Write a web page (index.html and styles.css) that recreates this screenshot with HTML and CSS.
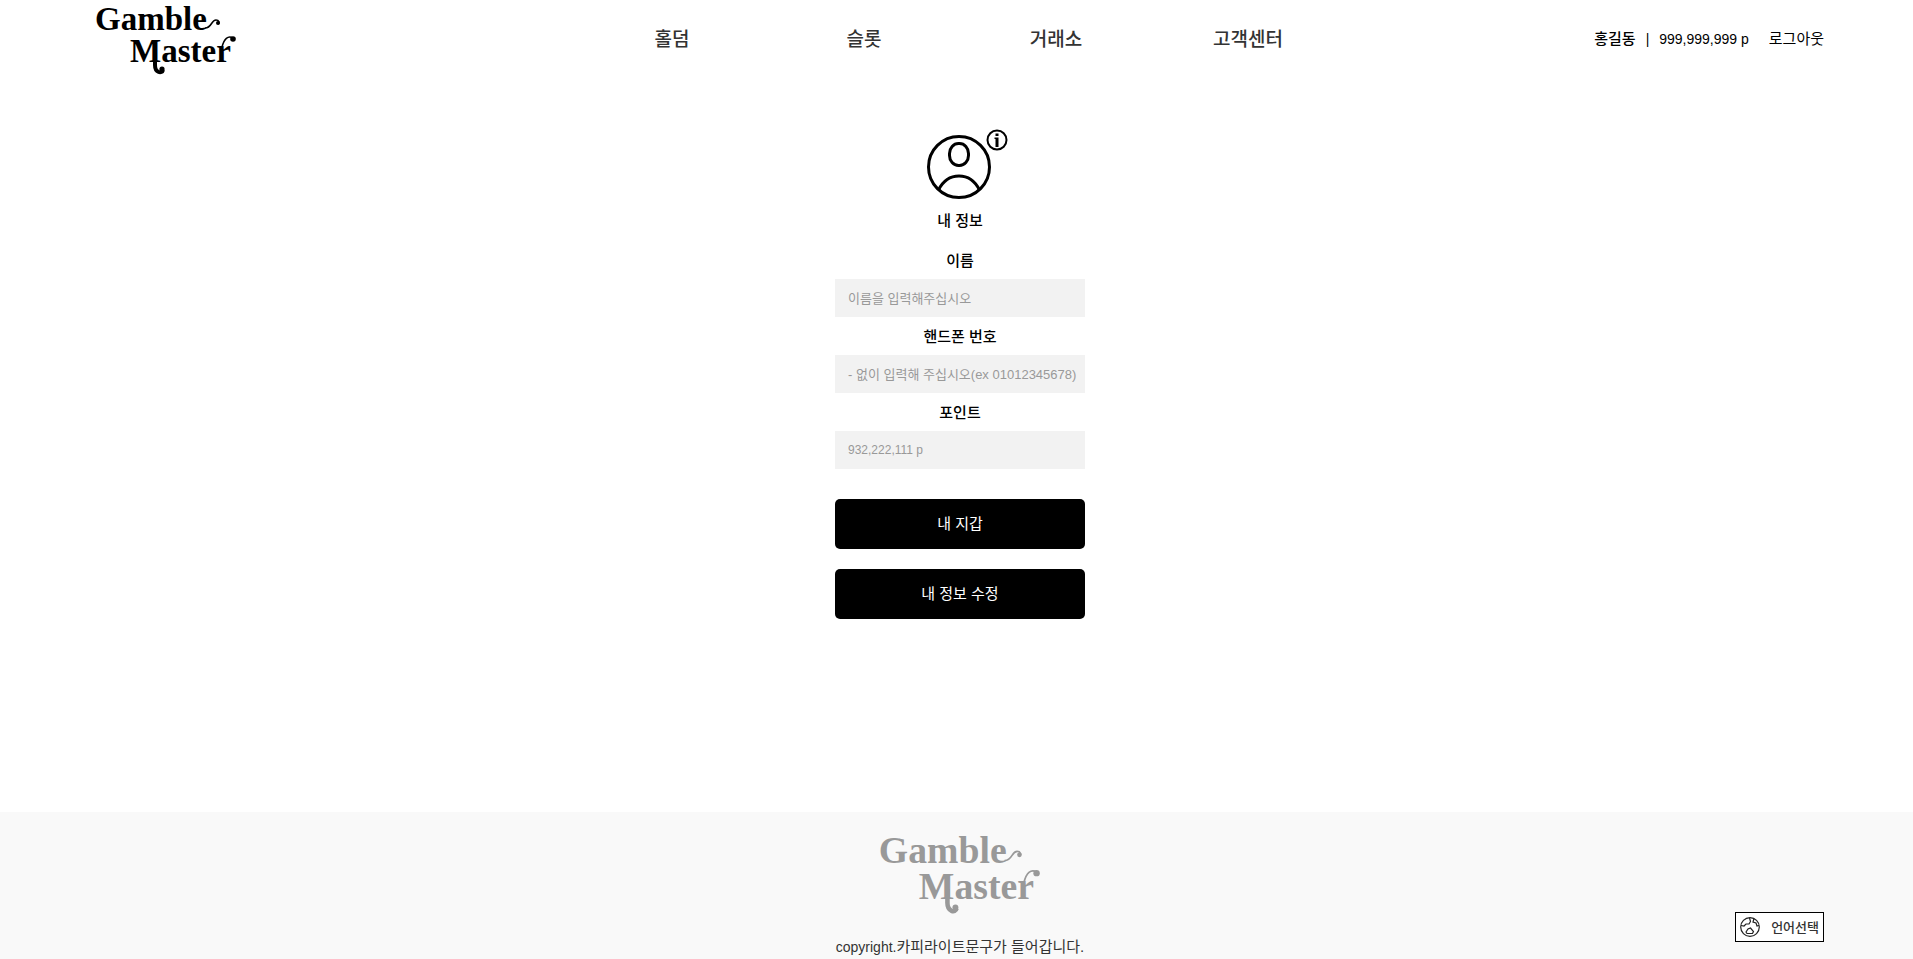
FILE: index.html
```html
<!DOCTYPE html>
<html lang="ko">
<head>
<meta charset="utf-8">
<meta name="viewport" content="width=device-width, initial-scale=1">
<title>Gamble Master</title>
<link rel="stylesheet" href="styles.css">
</head>
<body>
<header class="header">
  <a class="logo" href="#" aria-label="Gamble Master">
    <svg class="logo-art" viewBox="0 0 140 71">
      <text class="logo-word" x="-1" y="27">Gamble</text>
      <text class="logo-word" x="34" y="59">Master</text>
      <path class="logo-swash" d="M109 25C116 25 115 17 120 17C123 17 124 20 122 21"/>
      <circle cx="122" cy="20" r="2"/>
      <path class="logo-swash thick" d="M59 50V62C59 70 66 71 67 67"/>
      <circle cx="66" cy="66" r="2.6"/>
      <path class="logo-swash" d="M126 44C128 36 132 32 137 35"/>
      <circle cx="137" cy="36" r="2.8"/>
    </svg>
  </a>
  <nav class="nav">
    <a href="#">홀덤</a>
    <a href="#">슬롯</a>
    <a href="#">거래소</a>
    <a href="#">고객센터</a>
  </nav>
  <div class="account">
    <strong class="user">홍길동</strong>
    <span class="bar">|</span>
    <span class="points">999,999,999 p</span>
    <a class="logout" href="#">로그아웃</a>
  </div>
</header>

<main class="main">
  <form class="profile">
    <svg class="avatar" viewBox="0 0 106 72" aria-hidden="true">
      <g class="line">
        <circle cx="52" cy="39" r="30.500"/>
        <rect x="42.500" y="15.500" width="19" height="22" rx="9" ry="10"/>
        <path d="M31.500 62C36 53 43 48 52 48C61 48 68 53 72.500 62"/>
        <circle class="badge" cx="90" cy="12" r="9.500"/>
      </g>
      <rect x="88.500" y="5.500" width="3" height="2.500"/>
      <path d="M87.500 9.500H91.500V19H88.500V11H87.500Z"/>
    </svg>
    <h1 class="title">내 정보</h1>
    <label class="label" for="name">이름</label>
    <input class="field" id="name" type="text" placeholder="이름을 입력해주십시오">
    <label class="label" for="phone">핸드폰 번호</label>
    <input class="field" id="phone" type="tel" placeholder="- 없이 입력해 주십시오(ex 01012345678)">
    <label class="label" for="point">포인트</label>
    <input class="field number" id="point" type="text" placeholder="932,222,111 p">
    <div class="actions">
      <button class="action" type="button">내 지갑</button>
      <button class="action" type="button">내 정보 수정</button>
    </div>
  </form>
</main>

<footer class="footer">
  <svg class="logo-art" viewBox="0 0 140 71" role="img" aria-label="Gamble Master">
    <text class="logo-word" x="-1" y="27">Gamble</text>
    <text class="logo-word" x="34" y="59">Master</text>
    <path class="logo-swash" d="M109 25C116 25 115 17 120 17C123 17 124 20 122 21"/>
    <circle cx="122" cy="20" r="2"/>
    <path class="logo-swash thick" d="M59 50V62C59 70 66 71 67 67"/>
    <circle cx="66" cy="66" r="2.6"/>
    <path class="logo-swash" d="M126 44C128 36 132 32 137 35"/>
    <circle cx="137" cy="36" r="2.8"/>
  </svg>
  <p class="copyright">copyright.<span class="notice">카피라이트문구가 들어갑니다.</span></p>
</footer>

<button class="language" type="button">
  <svg class="globe" viewBox="0 0 20 20" aria-hidden="true">
    <circle cx="10" cy="10" r="9.300"/>
    <path d="M1 8.500L4 9L6 7L9 7L10.500 4.500L9.500 1M14 1.500L13 5L16 6L17 9L19 8.500"/>
    <path d="M6 15L8 12L10.500 11L13.500 14.500L12.500 16.500H7Z"/>
  </svg>
  언어선택
</button>
</body>
</html>
```
FILE: styles.css
```css
:root {
  --gutter-start: 96px;
  --gutter-end: 89px;
  --sans: "Liberation Sans", "Noto Sans CJK KR", sans-serif;
  --korean: "Noto Sans CJK KR", sans-serif;
}

* {
  box-sizing: border-box;
}

body {
  margin: 0;
  min-height: 100vh;
  display: flex;
  flex-direction: column;
  background: #fff;
  color: #000;
  font: 14px/20px var(--sans);
}

a {
  color: inherit;
  text-decoration: none;
}

.header {
  display: grid;
  grid-template-columns: 1fr minmax(0, 768px) 1fr;
  align-items: center;
  height: 76px;
  padding: 0 var(--gutter-end) 0 var(--gutter-start);
}

.logo {
  justify-self: start;
}

.logo-art {
  display: block;
  width: 140px;
  fill: currentColor;
  overflow: visible;
}

.logo-word {
  font: bold 33px "Liberation Serif", serif;
}

.logo-swash {
  fill: none;
  stroke: currentColor;
  stroke-width: 1.5;
}

.logo-swash.thick {
  stroke-width: 4;
}

.nav {
  display: grid;
  grid-template-columns: repeat(4, 1fr);
  text-align: center;
  font: 500 19px/28px var(--korean);
  color: #333;
}

.account {
  display: flex;
  justify-content: flex-end;
  align-items: center;
  padding-top: 2px;
}

.user,
.logout {
  font-size: 15px;
}

.user {
  font-weight: 500;
}

.bar {
  margin: 0 10px;
}

.logout {
  margin-left: 20px;
}

.main {
  flex: 1;
  padding: 52px var(--gutter-end) 40px var(--gutter-start);
}

.profile {
  display: flex;
  flex-direction: column;
  width: 250px;
  margin: 0 auto;
}

.avatar {
  width: 106px;
  align-self: center;
}

.line {
  fill: none;
  stroke: #000;
  stroke-width: 3;
}

.badge {
  stroke-width: 2;
}

.title,
.label {
  margin: 0;
  padding-top: 2px;
  text-align: center;
  font-size: 15px;
  line-height: 36px;
  font-weight: 500;
}

.title {
  padding: 3px 0 2px;
}

.field {
  width: 100%;
  height: 38px;
  padding: 0 8px 0 13px;
  border: 0;
  background: #f2f2f2;
  font: 13px/20px var(--sans);
}

.field::placeholder {
  color: #999;
  opacity: 1;
}

.field.number {
  font-size: 12px;
}

.actions {
  display: grid;
  gap: 20px;
  margin-top: 30px;
}

.action {
  height: 50px;
  border: 0;
  border-radius: 5px;
  background: #000;
  color: #fff;
  font: 15px/20px var(--sans);
}

.footer {
  display: flex;
  flex-direction: column;
  align-items: center;
  min-height: 147px;
  padding: 20px var(--gutter-end) 2px var(--gutter-start);
  background: #f9f9f9;
}

.footer .logo-art {
  width: 160px;
  color: #999;
}

.copyright {
  margin: 24px 0 0;
  color: #333;
  white-space: nowrap;
}

.notice {
  font-size: 15px;
}

.language {
  position: fixed;
  right: var(--gutter-end);
  bottom: 17px;
  display: flex;
  align-items: center;
  gap: 11px;
  height: 30px;
  padding: 0 4px;
  border: 1px solid #000;
  background: #fff;
  color: #333;
  font: 500 13px/20px var(--korean);
}

.globe {
  width: 20px;
  fill: none;
  stroke: #222;
  stroke-width: 1.2;
}
```
